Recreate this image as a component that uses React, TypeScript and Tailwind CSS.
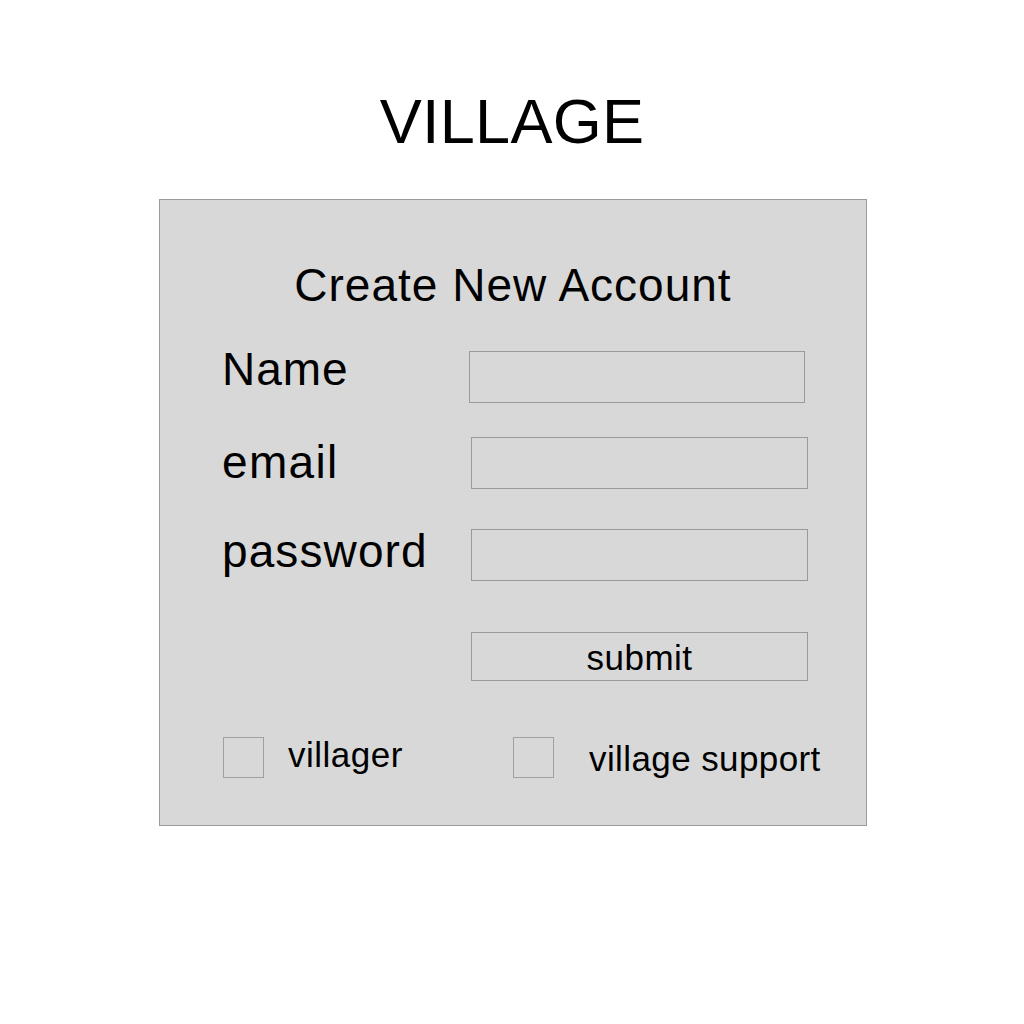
import React from "react";

const font = { fontFamily: '"Liberation Sans", Arial, sans-serif' };

export default function App() {
  return (
    <div className="w-[1024px] h-[1024px] bg-white text-black" style={font}>
      <div className="pt-[90px] text-center text-[63px] leading-none tracking-[0.3px]">VILLAGE</div>
      <div className="mt-[46px] ml-[159px] w-[708px] h-[627px] border border-[#9a9a9a] bg-[#d8d8d8] flex flex-col">
        <div className="mt-[62px] text-center text-[46px] leading-none tracking-[1px]">Create New Account</div>

        <div className="mt-[38px] flex items-start pl-[62px] h-[57px]">
          <label className="w-[247px] shrink-0 text-[46px] leading-none tracking-[1px]">Name</label>
          <input className="mt-[5px] w-[336px] h-[52px] border border-[#9a9a9a] bg-transparent outline-none" />
        </div>

        <div className="mt-[34px] flex items-start pl-[62px] h-[52px]">
          <label className="mt-[2px] w-[249px] shrink-0 text-[46px] leading-none tracking-[1.3px]">email</label>
          <input className="w-[337px] h-[52px] border border-[#9a9a9a] bg-transparent outline-none" />
        </div>

        <div className="mt-[39px] flex items-start pl-[62px] h-[53px]">
          <label className="w-[249px] shrink-0 text-[46px] leading-none tracking-[1.1px]">password</label>
          <input className="mt-[1px] w-[337px] h-[52px] border border-[#9a9a9a] bg-transparent outline-none" />
        </div>

        <div className="mt-[51px] flex pl-[311px]">
          <button className="w-[337px] h-[49px] border border-[#9a9a9a] bg-transparent text-[35px] leading-[35px] pt-[2px] text-center tracking-[0.5px]">
            submit
          </button>
        </div>

        <div className="mt-[56px] flex items-start pl-[63px]">
          <input type="checkbox" className="appearance-none w-[41px] h-[41px] border border-[#a0a0a0] bg-transparent shrink-0" />
          <span className="ml-[24px] w-[225px] shrink-0 text-[35px] leading-none tracking-[0.5px]">villager</span>
          <input type="checkbox" className="appearance-none w-[41px] h-[41px] border border-[#a0a0a0] bg-transparent shrink-0" />
          <span className="ml-[35px] mt-[4px] text-[35px] leading-none whitespace-nowrap tracking-[0.4px]">village support</span>
        </div>
      </div>
    </div>
  );
}
